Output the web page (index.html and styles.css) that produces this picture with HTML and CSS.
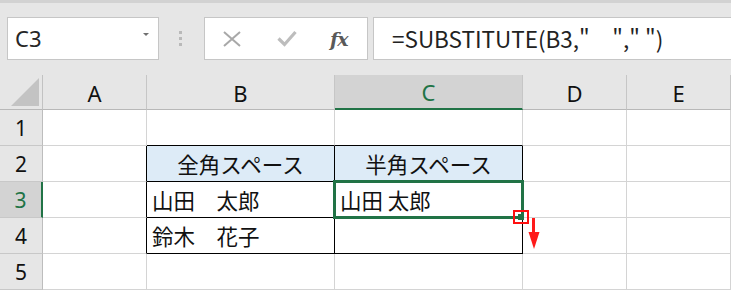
FILE: index.html
```html
<!DOCTYPE html>
<html lang="ja">
<head>
<meta charset="utf-8">
<link rel="stylesheet" href="styles.css">
</head>
<body>
<div class="topstrip"></div>
<div class="fbar">
  <div class="namebox"><span class="nb-text">C3</span><span class="nb-arrow"></span></div>
  <div class="grip"><i></i><i></i><i></i></div>
  <div class="btns">
    <svg class="ico-x" width="18" height="16" viewBox="0 0 18 16"><path d="M1 1 L17 15 M17 1 L1 15" stroke="#a8a8a8" stroke-width="2" fill="none"/></svg>
    <svg class="ico-check" width="20" height="17" viewBox="0 0 20 17"><path d="M1.5 8.5 L7.5 14.5 L18.5 2" stroke="#bdbdbd" stroke-width="3.2" fill="none"/></svg>
    <span class="fx">fx</span>
  </div>
  <div class="formula">=SUBSTITUTE(B3,"　"," ")</div>
</div>
<div class="sheet">
  <div class="corner"><svg width="28" height="28" viewBox="0 0 28 28"><path d="M0 28 L28 28 L28 0 Z" fill="#c3c3c3"/></svg></div>
  <div class="ch">A</div>
  <div class="ch">B</div>
  <div class="ch sel">C</div>
  <div class="ch">D</div>
  <div class="ch">E</div>

  <div class="rh">1</div>
  <div class="c"></div>
  <div class="c bb"></div>
  <div class="c bb"></div>
  <div class="c"></div>
  <div class="c"></div>

  <div class="rh">2</div>
  <div class="c br"></div>
  <div class="c t hd">全角スペース</div>
  <div class="c t hd">半角スペース</div>
  <div class="c"></div>
  <div class="c"></div>

  <div class="rh sel">3</div>
  <div class="c br"></div>
  <div class="c t">山田　太郎</div>
  <div class="c t active">山田 太郎</div>
  <div class="c"></div>
  <div class="c"></div>

  <div class="rh">4</div>
  <div class="c br"></div>
  <div class="c t">鈴木　花子</div>
  <div class="c t"></div>
  <div class="c"></div>
  <div class="c"></div>

  <div class="rh">5</div>
  <div class="c"></div>
  <div class="c"></div>
  <div class="c"></div>
  <div class="c"></div>
  <div class="c"></div>

  <svg class="annot" width="40" height="44" viewBox="0 0 40 44">
    <rect x="1" y="1" width="14" height="12" fill="none" stroke="#ff1010" stroke-width="2"/>
    <rect x="5" y="4" width="6" height="6" fill="#217346"/>
    <rect x="19" y="8" width="3" height="15" fill="#ff1a1a"/>
    <path d="M15.5 22 L26.5 22 L21 39 Z" fill="#ff1a1a"/>
  </svg>
</div>
</body>
</html>
```

FILE: styles.css
```css
* { box-sizing: border-box; }
html, body { margin: 0; padding: 0; }
body {
  width: 731px;
  height: 290px;
  overflow: hidden;
  background: #e6e6e6;
  font-family: "Noto Sans CJK JP", "Noto Sans", sans-serif;
  color: #1a1a1a;
}
.topstrip { height: 3px; background: #d2d2d2; }
.fbar {
  display: flex;
  align-items: stretch;
  padding: 14px 0 15px 7px;
  height: 72px;
}
.namebox {
  width: 152px;
  background: #fff;
  border: 1px solid #c6c6c6;
  display: flex;
  align-items: center;
  justify-content: space-between;
  padding: 0 9px 2px 7px;
}
.nb-text { font-size: 22px; color: #262626; font-family: "Noto Sans", sans-serif; }
.nb-arrow {
  width: 0; height: 0;
  border-left: 3px solid transparent;
  border-right: 3px solid transparent;
  border-top: 3px solid #707070;
  margin-bottom: 6px;
}
.grip {
  width: 45px;
  display: flex;
  flex-direction: column;
  align-items: center;
  justify-content: center;
  gap: 3px;
  padding-right: 3px;
}
.grip i { display: block; width: 3px; height: 3px; background: #b9b9b9; }
.btns {
  width: 164px;
  background: #fff;
  border: 1px solid #c6c6c6;
  display: flex;
  align-items: center;
  padding-left: 18px;
}
.ico-check { margin-left: 36px; }
.fx {
  margin-left: 33px;
  font-family: "DejaVu Serif", "Liberation Serif", serif;
  font-style: italic;
  font-weight: bold;
  font-size: 19px;
  color: #595959;
  letter-spacing: -1px;
}
.formula {
  flex: 1;
  margin-left: 5px;
  margin-right: -2px;
  background: #fff;
  border: 1px solid #c6c6c6;
  display: flex;
  align-items: center;
  padding-left: 18px;
  padding-bottom: 1px;
  font-size: 22.5px;
  color: #222;
}
.sheet {
  position: relative;
  display: grid;
  grid-template-columns: 43px 104px 188px 188px 104px 104px;
  grid-template-rows: 35px repeat(5, 36px);
  background: #fff;
}
.corner {
  background: #e6e6e6;
  border-right: 1px solid #c2c2c2;
  border-bottom: 1px solid #b8b8b8;
  display: flex;
  align-items: flex-end;
  justify-content: flex-end;
  padding: 0 3px 3px 0;
}
.corner svg { display: block; }
.ch {
  background: #e6e6e6;
  border-right: 1px solid #c6c6c6;
  border-bottom: 1px solid #b8b8b8;
  display: flex;
  align-items: center;
  justify-content: center;
  font-size: 22px;
  font-family: "Noto Sans", sans-serif;
  color: #111;
  padding-top: 1px;
}
.ch.sel {
  background: #d3d3d3;
  border-bottom: 2px solid #217346;
  color: #217346;
}
.rh {
  background: #e6e6e6;
  border-right: 1px solid #bdbdbd;
  border-bottom: 1px solid #c8c8c8;
  display: flex;
  align-items: center;
  justify-content: center;
  font-size: 21px;
  font-family: "Noto Sans", sans-serif;
  color: #111;
}
.rh.sel {
  background: #d3d3d3;
  border-right: 2px solid #217346;
  color: #217346;
}
.c {
  border-right: 1px solid #d4d4d4;
  border-bottom: 1px solid #d4d4d4;
}
.c.bb { border-bottom-color: #000; }
.c.br { border-right-color: #000; }
.c.t {
  border-right-color: #000;
  border-bottom-color: #000;
  display: flex;
  align-items: center;
  padding-left: 5px;
  font-size: 21.5px;
  color: #111;
}
.c.hd {
  background: #ddebf7;
  justify-content: center;
  padding-left: 0;
}
.c.active { position: relative; }
.c.active::after {
  content: "";
  position: absolute;
  left: -2px; top: -2px; right: -2px; bottom: -2px;
  border: 3px solid #217346;
}
.annot {
  position: absolute;
  left: 513px;
  top: 135px;
}
```
